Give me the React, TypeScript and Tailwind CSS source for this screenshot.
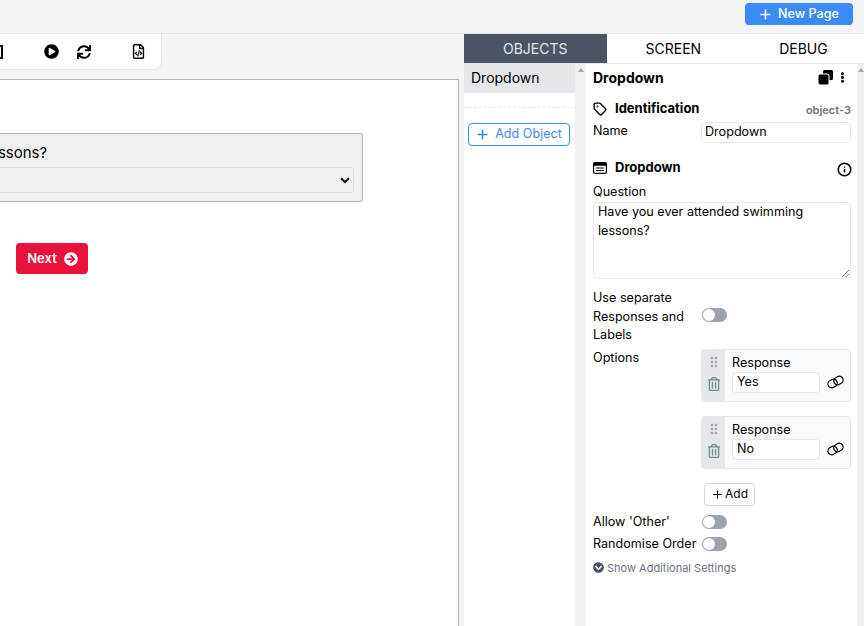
import { FaArrowCircleRight, FaChevronCircleDown, FaEllipsisV, FaPlayCircle, FaRegFileCode, FaRegTrashAlt, FaSync } from 'react-icons/fa';
import { LuTag, LuPlus, LuInfo } from 'react-icons/lu';
import { MdDragIndicator } from 'react-icons/md';

const Toggle = ({ className = '' }: { className?: string }) => (
  <div className={`ml-[1px] w-[25px] h-[14px] rounded-full bg-[#9ca3af] p-[1px] ${className}`}>
    <div className="w-[12px] h-[12px] rounded-full bg-white" />
  </div>
);

const DropdownIcon = () => (
  <svg width="14" height="12" viewBox="0 0 14 12">
    <rect x="0.6" y="0.6" width="12.8" height="10.8" rx="1.5" fill="none" stroke="#000" strokeWidth="1.2" />
    <rect x="0.6" y="0.6" width="12.8" height="3.2" fill="#000" />
    <path d="M3 6h8M3 8.5h8" stroke="#000" strokeWidth="1.1" />
  </svg>
);

const CopyIcon = () => (
  <svg width="15" height="15" viewBox="0 0 15 15">
    <rect x="5" y="0" width="10" height="10" rx="1.5" fill="#000" />
    <rect x="0" y="4" width="11" height="11" rx="2" fill="#000" stroke="#fff" strokeWidth="1" />
  </svg>
);

const LinkIcon = () => (
  <svg width="17" height="14" viewBox="0 0 17 14" fill="none" stroke="#000" strokeWidth="1.2">
    <rect x="0.8" y="4.7" width="9.6" height="7.6" rx="3.8" transform="rotate(-30 5.6 8.5)" />
    <rect x="6.6" y="1.7" width="9.6" height="7.6" rx="3.8" transform="rotate(-30 11.4 5.5)" />
  </svg>
);

const ScrollTrack = ({ className }: { className: string }) => (
  <div className={`shrink-0 bg-[#f1f1f1] flex pt-[4px] ${className}`}>
    <div className="w-0 h-0 border-x-[3px] border-x-transparent border-b-[4px] border-b-[#a3a3a3]" />
  </div>
);

const OptionCard = ({ value, mb }: { value: string; mb: string }) => (
  <div className={`flex w-[150px] border border-[#e5e7eb] rounded bg-[#f9fafb] overflow-hidden ${mb}`}>
    <div className="w-[23px] bg-[#e5e7eb] flex flex-col items-center pt-[4px] gap-[7px]">
      <MdDragIndicator className="text-[#9ca3af] text-[16px]" />
      <FaRegTrashAlt className="text-[#6f8d90] text-[14px]" />
    </div>
    <div className="pl-[7px] pt-[3px] pb-[8px]">
      <div className="leading-[19px]">Response</div>
      <div className="flex items-center gap-[7px]">
        <div className="w-[88px] h-[21px] bg-white border border-[#e5e7eb] rounded pl-[4px] leading-[17px]">{value}</div>
        <LinkIcon />
      </div>
    </div>
  </div>
);

export default function App() {
  return (
    <div className="w-[864px] h-[626px] overflow-hidden bg-white text-[14px] text-black flex flex-col font-['Inter',sans-serif]">
      <div className="h-[34px] shrink-0 bg-[#f3f4f6] border-b border-[#e5e7eb] flex justify-end items-start pt-[3px] pr-[11px]">
        <button className="w-[108px] h-[22px] rounded bg-[#3b8bf6] text-white text-[12.6px] font-medium flex items-center justify-center gap-[5px] pr-[1px]">
          <LuPlus className="text-[15px]" strokeWidth={2.6} />
          New Page
        </button>
      </div>

      <div className="flex flex-1 min-h-0">
        <div className="w-[464px] shrink-0 bg-[#f3f4f6] pr-[5px] flex flex-col">
          <div className="w-[162px] h-[36px] bg-white rounded-br-lg border-b border-r border-[#e5e7eb] flex items-center overflow-hidden">
            <div className="w-[3px] h-[14px] border-y-2 border-r-2 border-black rounded-r-[1px]" />
            <FaPlayCircle className="text-[15px] ml-[41px]" />
            <FaSync className="text-[14px] ml-[18px]" />
            <FaRegFileCode className="text-[15px] ml-[40px]" />
          </div>
          <div className="mt-[9px] flex-1 bg-white border-t border-r border-[#b5b5b5] flex flex-col">
            <div className="mt-[53px] w-[363px] h-[69px] bg-[#f0f0f0] border-y border-r border-[#b5b5b5] rounded-r-[3px] pr-[8px] overflow-hidden">
              <div className="mt-[9px] leading-[20px] text-[15px] whitespace-nowrap -ml-[263px]">Have you ever attended swimming lessons?</div>
              <div className="mt-[4px] h-[26px] border-y border-r border-[#dcdcdc] rounded-r-[3px] flex items-center justify-end pr-[3px]">
                <svg width="10" height="7" viewBox="0 0 10 7">
                  <path d="M1 1.2l4 4 4-4" fill="none" stroke="#111" strokeWidth="2" />
                </svg>
              </div>
            </div>
            <button className="mt-[41px] ml-[16px] w-[72px] h-[31px] pl-[1px] rounded bg-[#e9123a] text-white font-semibold text-[13px] flex items-center justify-center gap-[7px]">
              Next
              <FaArrowCircleRight className="text-[14px]" />
            </button>
          </div>
        </div>

        <div className="flex-1 min-w-0 flex flex-col">
          <div className="h-[30px] shrink-0 flex overflow-hidden border-b border-[#e5e7eb] leading-[29px] whitespace-nowrap">
            <div className="px-[39px] bg-[#4b5563] text-[#e5e7eb]">OBJECTS</div>
            <div className="px-[39px]">SCREEN</div>
            <div className="px-[39px]">DEBUG</div>
          </div>

          <div className="flex-1 flex min-h-0">
            <div className="w-[111px] shrink-0">
              <div className="h-[29px] bg-[#e5e7eb] pl-[7px] leading-[27px]">Dropdown</div>
              <div className="mt-[14px] border-t border-dashed border-[#e5e7eb]" />
              <button className="mt-[15px] ml-[4px] w-[102px] h-[23px] border border-[#3b8bf6] rounded text-[12.6px] text-[#3b8bf6] flex items-center justify-center gap-[5px] pr-[1px]">
                <LuPlus className="text-[15px]" strokeWidth={2.6} />
                Add Object
              </button>
            </div>
            <ScrollTrack className="w-[11px] justify-center" />

            <div className="w-[271px] shrink-0 pl-[7px] pr-[6px] pt-[4px] text-[12.6px]">
              <div className="flex items-center justify-between h-[18px] pr-[7px]">
                <span className="font-bold text-[14px]">Dropdown</span>
                <div className="flex items-center gap-[4px] -mr-[4px]">
                  <CopyIcon />
                  <FaEllipsisV className="text-[11px]" />
                </div>
              </div>

              <div className="mt-[14px] flex items-center justify-between h-[18px]">
                <div className="flex items-center gap-[8px] font-bold text-[13px]">
                  <LuTag className="text-[14px]" strokeWidth={2.3} />
                  Identification
                </div>
                <span className="text-[11px] font-semibold text-[#6b7280] mt-[3px]">object-3</span>
              </div>
              <div className="mt-[4px] flex items-center h-[21px]">
                <span className="w-[108px] -mt-[2px]">Name</span>
                <div className="w-[150px] h-[21px] border border-[#e5e7eb] rounded pl-[3px] leading-[17px]">Dropdown</div>
              </div>

              <div className="mt-[16px] flex items-center justify-between h-[18px]">
                <div className="flex items-center gap-[8px] font-bold text-[13px]">
                  <DropdownIcon />
                  Dropdown
                </div>
                <LuInfo className="text-[15px] mt-[3px] -mr-[1px]" strokeWidth={2.5} />
              </div>
              <div className="mt-[6px] h-[19px] leading-[18px]">Question</div>
              <div className="relative w-[258px] h-[77px] border border-[#e5e7eb] rounded px-[4px] leading-[19px]">
                <div className="-mt-[1px]">Have you ever attended swimming lessons?</div>
                <svg className="absolute right-[1px] bottom-[1px]" width="8" height="8" viewBox="0 0 8 8">
                  <path d="M1 8l7-7M5 8l3-3" stroke="#555" strokeWidth="0.8" />
                </svg>
              </div>

              <div className="mt-[10px] flex items-center">
                <div className="w-[108px] leading-[18.5px] pr-[8px]">Use separate Responses and Labels</div>
                <Toggle className="-mt-[3px]" />
              </div>

              <div className="mt-[4px] flex">
                <div className="w-[108px] leading-[18px]">Options</div>
                <div>
                  <OptionCard value="Yes" mb="mb-[14px]" />
                  <OptionCard value="No" mb="" />
                </div>
              </div>

              <button className="mt-[14px] ml-[111px] w-[51px] h-[23px] border border-[#d1d5db] rounded text-[12px] flex items-center justify-center gap-[1px]">
                <LuPlus className="text-[13px]" />
                Add
              </button>

              <div className="mt-[8px] flex items-center h-[16px]">
                <span className="w-[108px] mt-[2px]">Allow 'Other'</span>
                <Toggle />
              </div>
              <div className="mt-[6px] flex items-center h-[16px]">
                <span className="w-[108px] whitespace-nowrap mt-[2px]">Randomise Order</span>
                <Toggle />
              </div>
              <div className="mt-[8px] flex items-center gap-[3px] text-[11px] text-[#6b7280]">
                <FaChevronCircleDown className="text-[11px] text-[#4b5563]" />
                Show Additional Settings
              </div>
            </div>
            <ScrollTrack className="w-[7px] justify-start pl-[1px]" />
          </div>
        </div>
      </div>
    </div>
  );
}
